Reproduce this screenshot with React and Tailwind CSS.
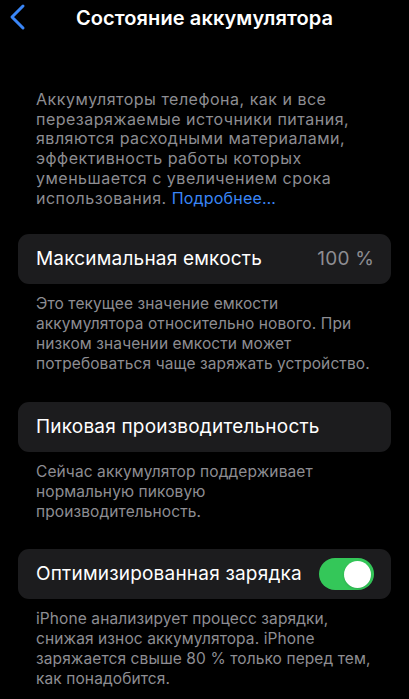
const Note = ({ lines, className = "" }) => (
    <p className={`px-[36px] text-[15.5px] leading-[20px] tracking-[0.1px] text-[#8d8d92] ${className}`}>
        {lines.map((line, i) => (
            <span key={i} className="block whitespace-nowrap">
                {line}
            </span>
        ))}
    </p>
);

const Row = ({ children }) => (
    <div className="mx-[18px] flex h-[50px] items-center justify-between rounded-[11px] bg-[#1c1c1e] pl-[18px] pr-[17px] text-[19px] tracking-[0.2px] text-white">
        {children}
    </div>
);

const App = () => {
    return (
        <div
            className="h-[699px] w-[409px] overflow-hidden bg-black"
            style={{ fontFamily: "Inter, 'Noto Sans', sans-serif" }}
        >
            <div className="relative flex h-[36px] items-center justify-center">
                <svg
                    width="18"
                    height="28"
                    viewBox="0 0 18 28"
                    className="absolute left-[8px] top-[3px]"
                    fill="none"
                    stroke="#3a86f7"
                    strokeWidth="3"
                    strokeLinecap="round"
                    strokeLinejoin="round"
                >
                    <path d="M15 3 L4 14 L15 25" />
                </svg>
                <h1 className="text-[20px] font-semibold tracking-[0.1px] text-white">
                    Состояние аккумулятора
                </h1>
            </div>

            <p className="mt-[54px] px-[36px] text-[16px] leading-[19.7px] tracking-[0.5px] text-[#8d8d92]">
                {[
                    "Аккумуляторы телефона, как и все",
                    "перезаряжаемые источники питания,",
                    "являются расходными материалами,",
                    "эффективность работы которых",
                    "уменьшается с увеличением срока",
                ].map((line) => (
                    <span key={line} className="block whitespace-nowrap">
                        {line}
                    </span>
                ))}
                <span className="block whitespace-nowrap">
                    использования. <span className="tracking-[0.2px] text-[#3a86f7]">Подробнее…</span>
                </span>
            </p>

            <div className="mt-[26px]">
                <Row>
                    <span>Максимальная емкость</span>
                    <span className="text-[#8d8d92]">100 %</span>
                </Row>
                <Note
                    className="mt-[10px]"
                    lines={[
                        "Это текущее значение емкости",
                        "аккумулятора относительно нового. При",
                        "низком значении емкости может",
                        "потребоваться чаще заряжать устройство.",
                    ]}
                />
            </div>

            <div className="mt-[28px]">
                <Row>
                    <span>Пиковая производительность</span>
                </Row>
                <Note
                    className="mt-[10px]"
                    lines={[
                        "Сейчас аккумулятор поддерживает",
                        "нормальную пиковую",
                        "производительность.",
                    ]}
                />
            </div>

            <div className="mt-[27px]">
                <Row>
                    <span>Оптимизированная зарядка</span>
                    <span className="flex h-[32px] w-[55px] items-center justify-end rounded-full bg-[#34c759] p-[3px]">
                        <span className="h-[27px] w-[27px] rounded-full bg-white shadow" />
                    </span>
                </Row>
                <Note
                    className="mt-[10px]"
                    lines={[
                        "iPhone анализирует процесс зарядки,",
                        "снижая износ аккумулятора. iPhone",
                        "заряжается свыше 80 % только перед тем,",
                        "как понадобится.",
                    ]}
                />
            </div>
        </div>
    );
};

export default App;
